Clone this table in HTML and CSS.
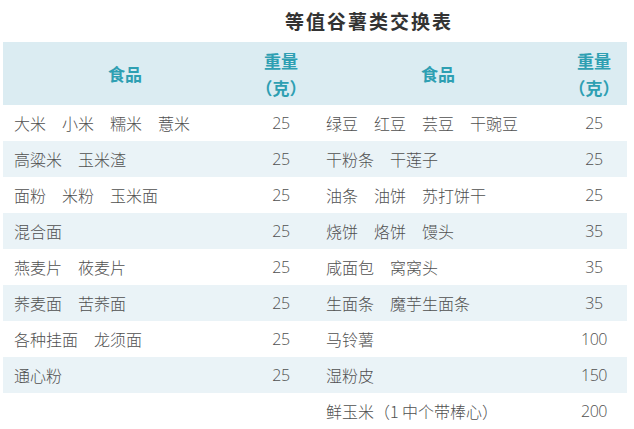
FILE: index.html
```html
<!DOCTYPE html>
<html lang="zh">
<head>
<meta charset="utf-8">
<title>等值谷薯类交换表</title>
<link rel="stylesheet" href="styles.css">
</head>
<body>
<h1 class="title">等值谷薯类交换表</h1>
<table class="swap">
  <colgroup>
    <col class="c-food1"><col class="c-wt1"><col class="c-food2"><col class="c-wt2">
  </colgroup>
  <thead>
    <tr>
      <th>食品</th>
      <th class="wt-h">重量<br>（克）</th>
      <th>食品</th>
      <th class="wt-h">重量<br>（克）</th>
    </tr>
  </thead>
  <tbody>
    <tr><td class="food">大米　小米　糯米　薏米</td><td class="num">25</td><td class="food">绿豆　红豆　芸豆　干豌豆</td><td class="num">25</td></tr>
    <tr class="alt"><td class="food">高粱米　玉米渣</td><td class="num">25</td><td class="food">干粉条　干莲子</td><td class="num">25</td></tr>
    <tr><td class="food">面粉　米粉　玉米面</td><td class="num">25</td><td class="food">油条　油饼　苏打饼干</td><td class="num">25</td></tr>
    <tr class="alt"><td class="food">混合面</td><td class="num">25</td><td class="food">烧饼　烙饼　馒头</td><td class="num">35</td></tr>
    <tr><td class="food">燕麦片　莜麦片</td><td class="num">25</td><td class="food">咸面包　窝窝头</td><td class="num">35</td></tr>
    <tr class="alt"><td class="food">荞麦面　苦荞面</td><td class="num">25</td><td class="food">生面条　魔芋生面条</td><td class="num">35</td></tr>
    <tr><td class="food">各种挂面　龙须面</td><td class="num">25</td><td class="food">马铃薯</td><td class="num">100</td></tr>
    <tr class="alt"><td class="food">通心粉</td><td class="num">25</td><td class="food">湿粉皮</td><td class="num">150</td></tr>
    <tr><td class="food"></td><td class="num"></td><td class="food">鲜玉米（1 中个带棒心）</td><td class="num">200</td></tr>
  </tbody>
</table>
</body>
</html>
```

FILE: styles.css
```css
html, body {
  margin: 0;
  padding: 0;
  background: #ffffff;
}

body {
  font-family: "Noto Sans CJK SC", "Noto Sans", sans-serif;
  color: #505050;
  width: 634px;
  height: 429px;
  overflow: hidden;
}

.title {
  margin: 0;
  height: 42px;
  line-height: 42px;
  padding-left: 285px;
  font-size: 19px;
  font-weight: 700;
  letter-spacing: 2px;
  color: #333333;
  box-sizing: border-box;
}

.swap {
  margin-left: 3px;
  width: 624px;
  border-collapse: collapse;
  table-layout: fixed;
}

.c-food1 { width: 244px; }
.c-wt1 { width: 68px; }
.c-food2 { width: 246px; }
.c-wt2 { width: 66px; }

.swap thead tr {
  background: #dbecf2;
  height: 63px;
}

.swap th {
  padding: 0;
  font-size: 17px;
  font-weight: 700;
  color: #2e9fb2;
  text-align: center;
  line-height: 27px;
  vertical-align: middle;
}

.swap tbody tr {
  height: 36px;
}

.swap tbody tr.alt {
  background: #eaf3f7;
}

.swap td {
  padding: 0;
  font-size: 16px;
  font-weight: 300;
  line-height: 20px;
  vertical-align: middle;
  white-space: nowrap;
}

.swap td.food {
  padding-left: 11px;
  text-align: left;
}

.swap td.num {
  text-align: center;
  font-family: "Open Sans", "Noto Sans", sans-serif;
  font-size: 16px;
  letter-spacing: -0.5px;
}
```
